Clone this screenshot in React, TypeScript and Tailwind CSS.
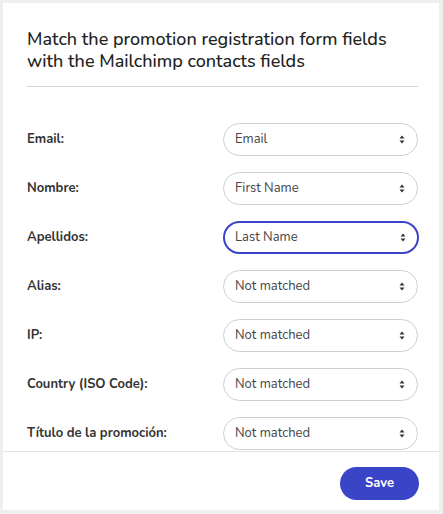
import React from "react";

const rows: { label: string; value: string; focused?: boolean }[] = [
  { label: "Email:", value: "Email" },
  { label: "Nombre:", value: "First Name" },
  { label: "Apellidos:", value: "Last Name", focused: true },
  { label: "Alias:", value: "Not matched" },
  { label: "IP:", value: "Not matched" },
  { label: "Country (ISO Code):", value: "Not matched" },
  { label: "Título de la promoción:", value: "Not matched" },
];

function Arrows() {
  return (
    <svg width="6" height="9" viewBox="0 0 6 9" className="shrink-0">
      <path d="M0.5 3.5 L3 0.5 L5.5 3.5 Z" fill="#333" />
      <path d="M0.5 5.5 L3 8.5 L5.5 5.5 Z" fill="#333" />
    </svg>
  );
}

export default function App() {
  return (
    <div
      className="h-[514px] w-[443px] bg-[#efefef] pt-[3px] pl-[3px] pr-[4px] pb-[4px]"
      style={{ fontFamily: "Nunito, Lato, 'Open Sans', sans-serif" }}
    >
      <div className="flex h-full flex-col bg-white">
        <div className="flex-1 overflow-hidden pl-[24px] pr-[21px] pt-[25px]">
          <h1 className="text-[18px] leading-[22px] font-medium text-[#222]">
            Match the promotion registration form fields with the Mailchimp contacts fields
          </h1>
          <div className="mt-[14px] h-px bg-[#d6d6d6]" />
          <div className="mt-[36px] flex flex-col gap-[16px]">
            {rows.map((r) => (
              <div key={r.label} className="flex items-center justify-between">
                <span className="text-[13px] font-bold text-[#333]">{r.label}</span>
                <div
                  className={
                    r.focused
                      ? "flex h-[33px] w-[196px] items-center justify-between rounded-full border-2 border-[#3b44c6] pl-[10px] pr-[11px] -mr-px"
                      : "flex h-[33px] w-[195px] items-center justify-between rounded-full border border-[#cfcfcf] pl-[11px] pr-[12px]"
                  }
                >
                  <span className="text-[13px] text-[#444]">{r.value}</span>
                  <Arrows />
                </div>
              </div>
            ))}
          </div>
        </div>
        <div className="flex h-[59px] items-start justify-end border-t border-[#e3e3e3] pt-[15px] pr-[20px]">
          <button className="h-[33px] w-[79px] rounded-full bg-[#3a44c6] text-[13px] font-bold text-white">
            Save
          </button>
        </div>
      </div>
    </div>
  );
}
